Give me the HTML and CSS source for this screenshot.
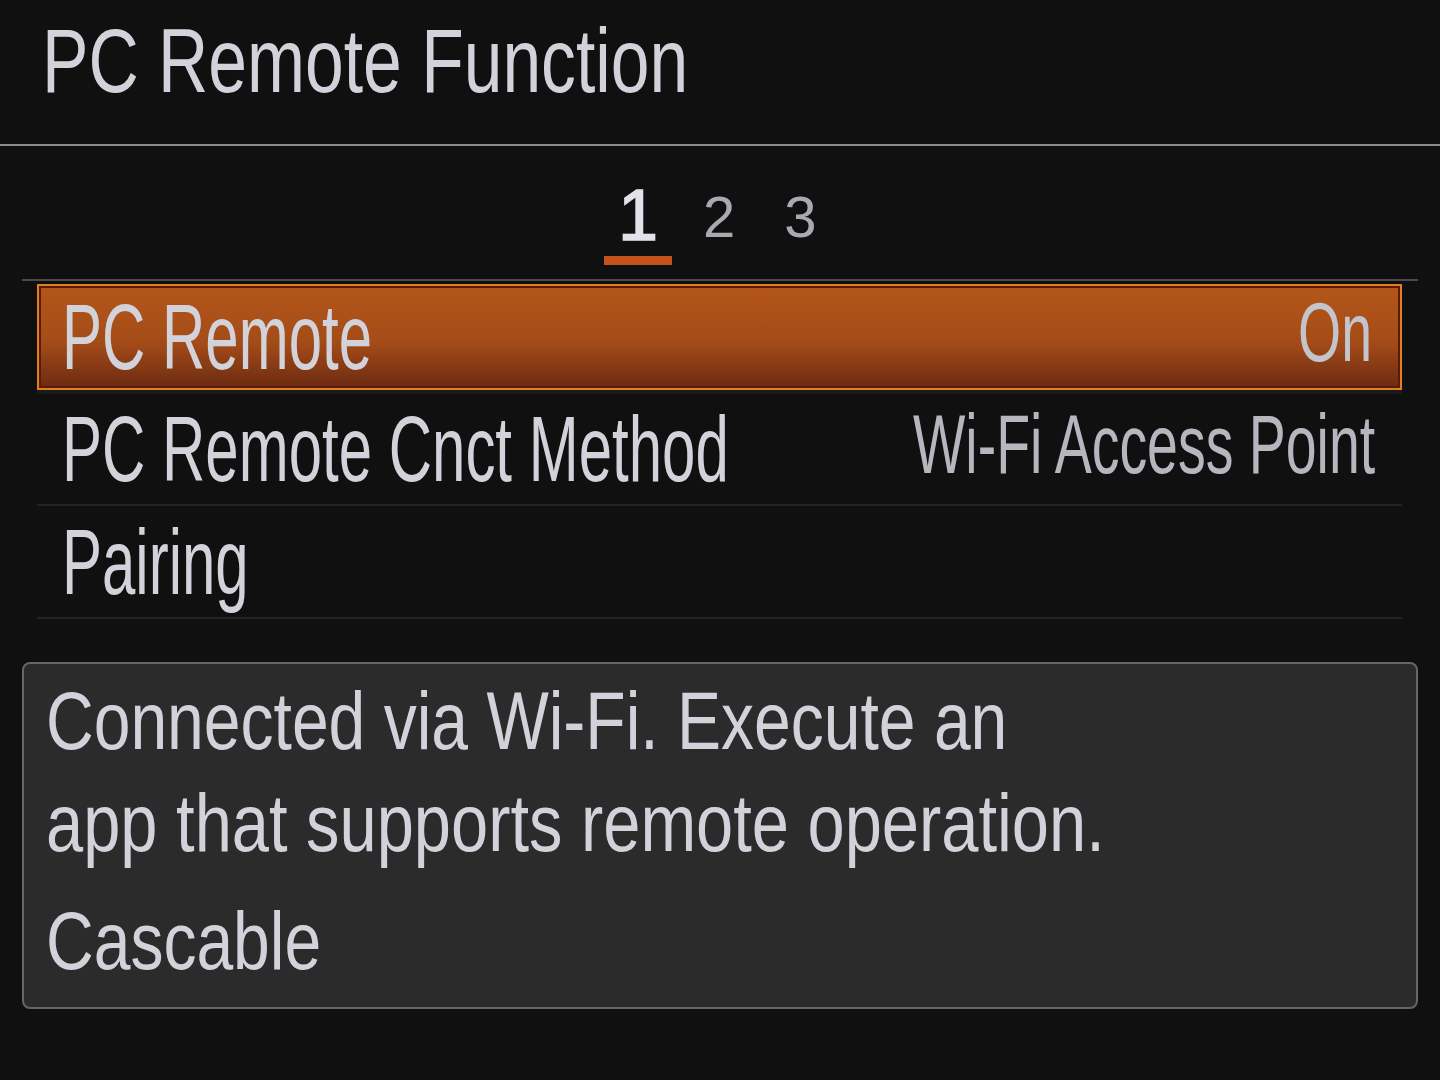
FILE: index.html
```html
<!DOCTYPE html>
<html lang="en">
<head>
  <meta charset="UTF-8" />
  <title>PC Remote Function</title>
  <link rel="stylesheet" href="styles.css">
</head>
<body>
  <div class="screen">
    <div class="header">
      <h1 class="title"><span class="narrow">PC Remote Function</span></h1>
    </div>

    <!-- page tabs -->
    <div class="tabs">
      <div class="tab active">1</div>
      <div class="tab second">2</div>
      <div class="tab third">3</div>
    </div>

    <div class="menu">
      <div class="row selected">
        <span class="label">PC Remote</span>
        <span class="value">On</span>
      </div>
      <div class="row">
        <span class="label">PC Remote Cnct Method</span>
        <span class="value">Wi-Fi Access Point</span>
      </div>
      <div class="row">
        <span class="label">Pairing</span>
      </div>
    </div>

    <div class="info">
      <p class="info-text"><span>Connected via Wi-Fi. Execute an</span><br><span class="wide">app that supports remote operation.</span></p>
      <p class="info-app"><span>Cascable</span></p>
    </div>
  </div>
</body>
</html>
```

FILE: styles.css
```css
body {
  margin: 0;
  padding: 0;
  background: #101010;
  font-family: "Liberation Sans", Arial, sans-serif;
  color: #d2d2da;
}

.screen {
  width: 1440px;
  height: 1080px;
  overflow: hidden;
}

.header {
  height: 146px;
  box-sizing: border-box;
  padding: 11px 0 0 42px;
  border-bottom: 2px solid #8a8a8c;
}

.title {
  margin: 0;
  font-weight: normal;
  font-size: 91px;
  line-height: 100px;
  white-space: nowrap;
}

.narrow {
  display: inline-block;
  transform: scaleX(0.765);
  transform-origin: left center;
}

.tabs {
  display: flex;
  align-items: baseline;
  padding: 33px 0 0 582px;
  margin: 0 22px;
  border-bottom: 2px solid #4a4a4a;
}

.tab {
  color: #a9a9b1;
  font-size: 58px;
  line-height: 60px;
  position: relative;
  top: -3px;
}

.tab.active {
  top: 0;
  width: 68px;
  text-align: center;
  color: #e2e2ea;
  font-size: 72px;
  line-height: 72px;
  -webkit-text-stroke: 1.5px #e2e2ea;
  padding-bottom: 5px;
  border-bottom: 9px solid #c4521a;
  margin-bottom: 14px;
}

.tab.second {
  margin-left: 31px;
}

.tab.third {
  margin-left: 49px;
}

.menu {
  margin: 3px 38px 0 37px;
}

.row {
  display: flex;
  align-items: center;
  height: 113px;
  box-sizing: border-box;
  padding: 0 27px 0 25px;
  border-bottom: 2px solid #232323;
  white-space: nowrap;
}

.row.selected {
  height: 106px;
  margin-bottom: 3px;
  padding: 0 28px 0 23px;
  border: 2px solid #e0801e;
  box-shadow: inset 0 0 0 2px #5a1a0a, 0 4px 0 #1a1a1a;
  background: linear-gradient(#b4561a, #a44c18 55%, #6c2a12);
}

.label {
  flex: 1 1 0;
  min-width: 0;
  display: inline-block;
  font-size: 93px;
  line-height: 102px;
  transform: scaleX(0.645);
  transform-origin: left center;
}

.value {
  flex: none;
  display: inline-block;
  font-size: 84px;
  line-height: 94px;
  color: #b6b6be;
  transform: translateY(-5px) scaleX(0.66);
  transform-origin: right center;
}

.row.selected .value {
  color: #c4c4cc;
}

.info {
  margin: 43px 22px 0 22px;
  height: 347px;
  box-sizing: border-box;
  padding: 6px 0 0 22px;
  background: #2b2b2b;
  border: 2px solid #666;
  border-radius: 8px;
  white-space: nowrap;
}

.info p {
  margin: 0;
  font-size: 81px;
  line-height: 102px;
}

.info span {
  display: inline-block;
  transform: scaleX(0.815);
  transform-origin: left center;
}

.info span.wide {
  transform: scaleX(0.825);
}

.info-app {
  margin-top: 16px !important;
}
```
